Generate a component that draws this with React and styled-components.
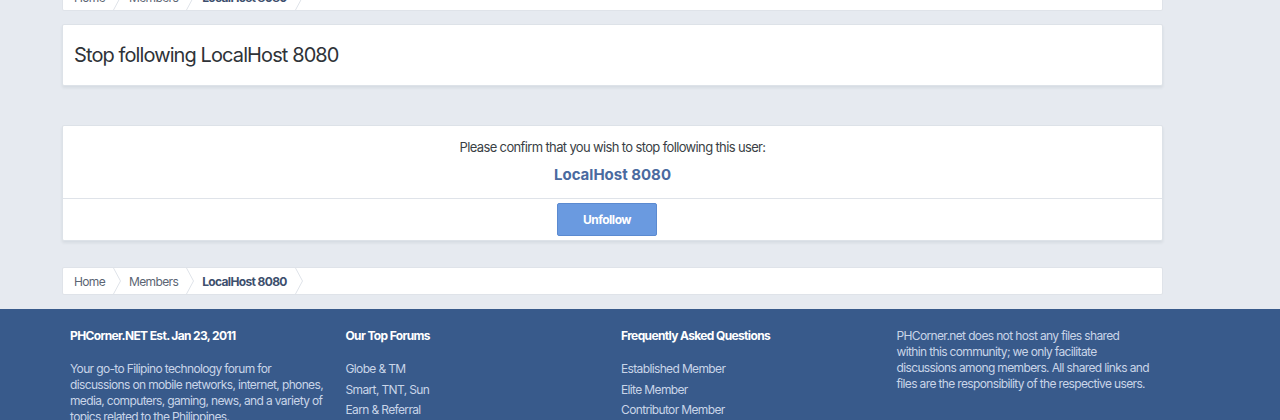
import styled, { createGlobalStyle } from "styled-components";

const GlobalStyle = createGlobalStyle`
    html, body {
        margin: 0;
        padding: 0;
        background: #e6eaf0;
        font-family: Inter, "Noto Sans", "Liberation Sans", sans-serif;
        letter-spacing: -0.04em;
        color: #2f3338;
        overflow: hidden;
    }
`

const Page = styled.div`
    display: flex;
    flex-direction: column;
`

const Body = styled.main`
    width: 1101px;
    margin: -17px 0 0 62px;
    display: flex;
    flex-direction: column;
`

const Crumbs = styled.nav`
    display: flex;
    align-items: stretch;
    height: 26px;
    background: #fff;
    border: 1px solid #dfe3e9;
    border-radius: 2px;
    margin-top: ${({$gap}) => $gap || 0}px;
    font-size: 12px;
`

const Crumb = styled.a`
    display: flex;
    align-items: center;
    gap: 8px;
    padding-left: ${({$first}) => $first ? 11 : 8}px;
    color: ${({$current}) => $current ? "#3d4f6d" : "#5b6573"};
    font-weight: ${({$current}) => $current ? 700 : 400};
    text-decoration: none;
    white-space: nowrap;

    svg {
        display: block;
        flex: none;
    }
`

const Block = styled.section`
    background: #fff;
    border: 1px solid #dde2e8;
    border-radius: 2px;
    box-shadow: 0 2px 3px rgba(30, 45, 70, 0.08);
    margin-top: ${({$gap}) => $gap}px;
`

const Title = styled.h1`
    margin: 0;
    height: 60px;
    display: flex;
    align-items: center;
    padding: 0 11px;
    font-size: 20px;
    font-weight: 400;
    letter-spacing: -0.045em;
    color: #2f3338;
`

const Confirm = styled.div`
    display: flex;
    flex-direction: column;
    align-items: center;
    padding: 13px 12px 14px;
    border-bottom: 1px solid #dfe3e9;
`

const Prompt = styled.p`
    margin: 0;
    font-size: 13px;
    line-height: 16px;
    color: #3a3f45;
`

const UserName = styled.a`
    margin-top: 11px;
    font-size: 15px;
    line-height: 18px;
    font-weight: 700;
    letter-spacing: 0;
    color: #4a6aa0;
    text-decoration: none;
`

const Actions = styled.div`
    display: flex;
    justify-content: center;
    padding: 4px 11px 4px 0;
`

const Button = styled.button`
    width: 100px;
    height: 33px;
    border: 1px solid #5b8ad0;
    border-radius: 2px;
    background: #6a9ae0;
    color: #fff;
    font-family: inherit;
    font-size: 12px;
    font-weight: 700;
    letter-spacing: -0.04em;
    cursor: pointer;
`

const Footer = styled.footer`
    margin-top: 14px;
    background: #385a8b;
    color: #c9d5e8;
    font-size: 12px;
`

const FooterInner = styled.div`
    width: 1085px;
    margin-left: 62px;
    padding: 19px 8px 40px;
    display: grid;
    grid-template-columns: repeat(4, 1fr);
    column-gap: 17px;
`

const Column = styled.div`
    display: flex;
    flex-direction: column;
`

const Heading = styled.h3`
    margin: 0;
    font-size: 12px;
    line-height: 16px;
    font-weight: 700;
    color: #fff;
`

const Text = styled.p`
    margin: ${({$top}) => $top ?? 17}px 0 0;
    line-height: 16px;
    max-width: ${({$width}) => $width || 256}px;
`

const Links = styled.ul`
    list-style: none;
    margin: 15px 0 0;
    padding: 0;

    li {
        line-height: 20.5px;
    }
`

const Chevron = () => (
    <svg width="8" height="26" viewBox="0 0 8 26">
        <polyline points="0.5,0 7.5,13 0.5,26" fill="none" stroke="#dfe3e9" strokeWidth="1" />
    </svg>
)

const Breadcrumbs = ({gap}) => (
    <Crumbs $gap={gap}>
        <Crumb $first>Home <Chevron /></Crumb>
        <Crumb>Members <Chevron /></Crumb>
        <Crumb $current>LocalHost 8080 <Chevron /></Crumb>
    </Crumbs>
)

const forums = ["Globe & TM", "Smart, TNT, Sun", "Earn & Referral", "Freebies", "Tutorials"];
const faqs = ["Established Member", "Elite Member", "Contributor Member", "Moderator", "Staff"];

const App = () => (
    <Page>
        <GlobalStyle />
        <Body>
            <Breadcrumbs />
            <Block $gap={13}>
                <Title>Stop following LocalHost 8080</Title>
            </Block>
            <Block $gap={39}>
                <Confirm>
                    <Prompt>Please confirm that you wish to stop following this user:</Prompt>
                    <UserName>LocalHost 8080</UserName>
                </Confirm>
                <Actions>
                    <Button>Unfollow</Button>
                </Actions>
            </Block>
            <Breadcrumbs gap={26} />
        </Body>
        <Footer>
            <FooterInner>
                <Column>
                    <Heading>PHCorner.NET Est. Jan 23, 2011</Heading>
                    <Text>
                        Your go-to Filipino technology forum for discussions on mobile networks,
                        internet, phones, media, computers, gaming, news, and a variety of topics
                        related to the Philippines.
                    </Text>
                </Column>
                <Column>
                    <Heading>Our Top Forums</Heading>
                    <Links>{forums.map(f => <li key={f}>{f}</li>)}</Links>
                </Column>
                <Column>
                    <Heading>Frequently Asked Questions</Heading>
                    <Links>{faqs.map(f => <li key={f}>{f}</li>)}</Links>
                </Column>
                <Column>
                    <Text $top={0} $width={264}>
                        PHCorner.net does not host any files shared<br />
                        within this community; we only facilitate discussions among members.
                        All shared links and files are the responsibility of the respective users.
                    </Text>
                </Column>
            </FooterInner>
        </Footer>
    </Page>
);

export default App;
